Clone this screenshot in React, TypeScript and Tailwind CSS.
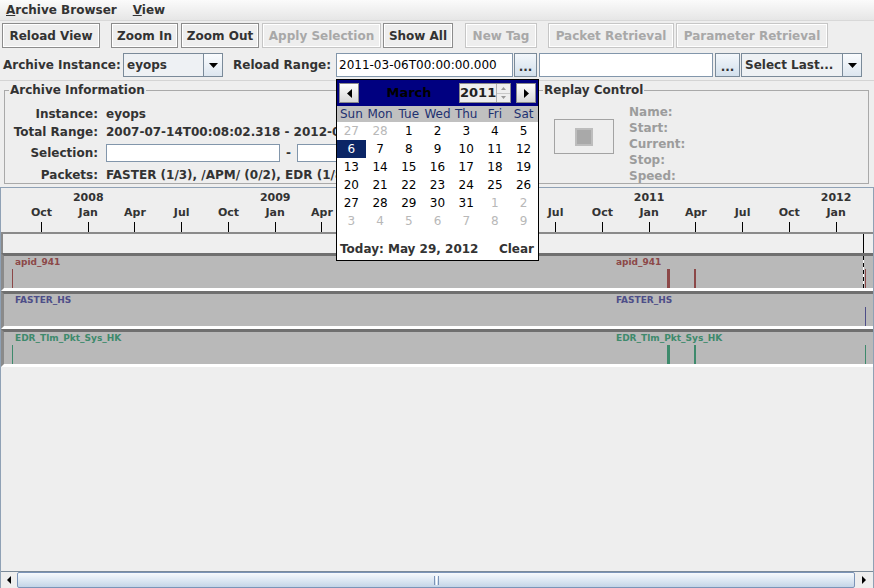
import clsx from 'clsx'

const toolButtons = [
  { label: 'Reload View', cls: 'ml-[2px] w-[98px]' },
  { label: 'Zoom In', cls: 'ml-[11px] w-[67px]' },
  { label: 'Zoom Out', cls: 'ml-[3px] w-[78px]' },
  { label: 'Apply Selection', cls: 'ml-[3px] w-[119px]', disabled: true },
  { label: 'Show All', cls: 'ml-[2px] w-[70px]' },
  { label: 'New Tag', cls: 'ml-[12px] w-[72px]', disabled: true },
  { label: 'Packet Retrieval', cls: 'ml-[11px] w-[126px]', disabled: true },
  { label: 'Parameter Retrieval', cls: 'ml-[2px] w-[152px]', disabled: true },
]

const months = ['Oct', 'Jan', 'Apr', 'Jul']
const quarters = Array.from({ length: 18 }, (_, i) => ({
  x: 41.5 + i * 46.74,
  month: months[i % 4],
  year: i % 4 === 1 ? String(2008 + (i - 1) / 4) : null,
}))

const tracks = [
  {
    name: 'apid_941',
    text: 'text-[#8c4848]',
    bg: 'bg-[#8c4848]',
    marks: [
      { x: 12, w: 1 },
      { x: 667, w: 3 },
      { x: 694, w: 2 },
      { x: 865, w: 1 },
    ],
    cursor: true,
  },
  { name: 'FASTER_HS', text: 'text-[#4e4e88]', bg: 'bg-[#4e4e88]', marks: [{ x: 865, w: 1 }], cursor: false },
  {
    name: 'EDR_Tlm_Pkt_Sys_HK',
    text: 'text-[#3e8a6c]',
    bg: 'bg-[#3e8a6c]',
    marks: [
      { x: 12, w: 1 },
      { x: 667, w: 3 },
      { x: 694, w: 2 },
      { x: 865, w: 1 },
    ],
    cursor: false,
  },
]

const weekdays = ['Sun', 'Mon', 'Tue', 'Wed', 'Thu', 'Fri', 'Sat']
const weeks = [
  [27, 28, 1, 2, 3, 4, 5],
  [6, 7, 8, 9, 10, 11, 12],
  [13, 14, 15, 16, 17, 18, 19],
  [20, 21, 22, 23, 24, 25, 26],
  [27, 28, 29, 30, 31, 1, 2],
  [3, 4, 5, 6, 7, 8, 9],
]
const outside = (row: number, d: number) => (row === 0 && d > 20) || (row >= 4 && d < 10)

function Combo({ text, cls }: { text: string; cls: string }) {
  return (
    <div className={clsx('flex h-[24px] border border-[#7a8a99] bg-[#eef1f4]', cls)}>
      <div className="flex flex-1 items-center pl-[3px] font-bold text-[#333]">{text}</div>
      <div className="flex w-[19px] items-center justify-center border-l border-[#7a8a99] bg-gradient-to-b from-[#fafcfe] to-[#dde6ef]">
        <svg width="9" height="5">
          <path d="M0 0h9L4.5 5z" fill="#000" />
        </svg>
      </div>
    </div>
  )
}

function DotsButton({ cls }: { cls: string }) {
  return (
    <div
      className={clsx(
        'flex h-[24px] items-end justify-center border border-[#7a8a99] bg-gradient-to-b from-[#f3f7fb] to-[#d3e0ec] pb-[3px] font-bold leading-none text-[#333]',
        cls,
      )}
    >
      ...
    </div>
  )
}

function ArrowBtn({ dir }: { dir: 'l' | 'r' }) {
  return (
    <div className="flex h-[20px] w-[20px] items-center justify-center border border-[#8a8a8a] bg-gradient-to-b from-[#ffffff] to-[#d8d8d8]">
      <svg width="5" height="9">
        <path d={dir === 'l' ? 'M5 0v9L0 4.5z' : 'M0 0v9L5 4.5z'} fill="#000" />
      </svg>
    </div>
  )
}

function Calendar() {
  return (
    <div className="absolute left-[336px] top-[79px] z-10 flex h-[182px] w-[203px] flex-col border border-black bg-white">
      {/* month / year header */}
      <div className="flex h-[26px] items-center bg-[#000080] px-[2px]">
        <ArrowBtn dir="l" />
        <div className="flex-1 text-center text-[13px] font-bold text-black">March</div>
        <div className="mr-[5px] flex h-[20px] w-[52px] border border-[#8a8a8a] bg-[#eeeeee]">
          <div className="flex flex-1 items-center justify-center text-[13px] font-bold text-[#222]">2011</div>
          <div className="flex w-[14px] flex-col border-l border-[#b0b0b0]">
            <div className="flex flex-1 items-center justify-center">
              <svg width="5" height="3">
                <path d="M0 3h5L2.5 0z" fill="#999" />
              </svg>
            </div>
            <div className="flex flex-1 items-center justify-center border-t border-[#c8c8c8]">
              <svg width="5" height="3">
                <path d="M0 0h5L2.5 3z" fill="#999" />
              </svg>
            </div>
          </div>
        </div>
        <ArrowBtn dir="r" />
      </div>
      <div className="grid h-[16px] grid-cols-7 items-center bg-[#c0c0c0] text-[#1e3170]">
        {weekdays.map((d) => (
          <div key={d} className="text-center leading-none">
            {d}
          </div>
        ))}
      </div>
      <div className="grid grid-cols-7">
        {weeks.map((w, r) =>
          w.map((d, c) => {
            const sel = r === 1 && c === 0
            return (
              <div
                key={`${r}-${c}`}
                className={clsx(
                  'flex h-[18px] items-center justify-center',
                  sel ? 'bg-[#0b2566] text-white' : outside(r, d) ? 'text-[#b8b8b8]' : 'text-black',
                )}
              >
                {d}
              </div>
            )
          }),
        )}
      </div>
      <div className="mt-auto mb-[1px] flex h-[20px] items-center justify-between px-[3px] font-bold text-[#333]">
        <span>Today: May 29, 2012</span>
        <span className="mr-[1px]">Clear</span>
      </div>
    </div>
  )
}

export default function App() {
  return (
    <div className="relative flex h-[588px] w-[874px] flex-col overflow-hidden bg-[#eeeeee] font-['DejaVu_Sans',sans-serif] text-[12px] text-[#333]">
      {/* Menu bar */}
      <div className="flex h-[21px] items-center border-b border-[#d8d8d8] bg-gradient-to-b from-[#fbfbfb] to-[#e6e6e6] font-bold">
        <span className="ml-[6px]">
          <span className="underline">A</span>rchive Browser
        </span>
        <span className="ml-[16px]">
          <span className="underline">V</span>iew
        </span>
      </div>

      {/* Toolbar */}
      <div className="flex h-[29px] items-center">
        {toolButtons.map((b) => (
          <div
            key={b.label}
            className={clsx(
              'flex h-[25px] items-center justify-center border font-bold shadow-[inset_1px_1px_0_#ffffff,inset_-1px_-1px_0_#ffffff]',
              b.cls,
              b.disabled ? 'border-[#c6c6c6] text-[#a8a8a8]' : 'border-[#8c8c8c] text-[#333]',
            )}
          >
            {b.label}
          </div>
        ))}
      </div>

      {/* Instance / range row */}
      <div className="flex h-[30px] items-center">
        <div className="ml-[3px] w-[120px] whitespace-nowrap font-bold">Archive Instance:</div>
        <Combo text="eyops" cls="w-[100px]" />
        <div className="ml-[10px] w-[103px] whitespace-nowrap font-bold">Reload Range:</div>
        <div className="flex h-[24px] w-[177px] items-center border border-[#8296ab] bg-white pl-[2px] text-black">
          2011-03-06T00:00:00.000
        </div>
        <DotsButton cls="ml-[1px] w-[23px]" />
        <div className="ml-[2px] h-[24px] w-[174px] border border-[#8296ab] bg-white" />
        <DotsButton cls="ml-[2px] w-[25px]" />
        <Combo text="Select Last..." cls="ml-[1px] w-[121px]" />
      </div>

      {/* Info panels */}
      <div className="flex h-[107px] border-t border-[#d4d4d4] px-[4px] pt-[2px]">
        <fieldset className="mb-[3px] w-[529px] min-w-0 border border-[#a9a9a9] pl-[1px]">
          <legend className="ml-[3px] px-[1px] font-bold leading-[15px]">Archive Information</legend>
          <div className="mt-[7px] grid grid-cols-[92px_1fr] gap-x-[8px] whitespace-nowrap font-bold">
            <div className="flex h-[18px] items-center justify-end">Instance:</div>
            <div className="flex h-[18px] items-center">eyops</div>
            <div className="flex h-[18px] items-center justify-end">Total Range:</div>
            <div className="flex h-[18px] items-center">2007-07-14T00:08:02.318 - 2012-03-26T08:41:20.062</div>
            <div className="flex h-[24px] items-center justify-end">Selection:</div>
            <div className="flex h-[24px] items-center">
              <div className="h-[18px] w-[174px] border border-[#8296ab] bg-white" />
              <span className="mx-[6px]">-</span>
              <div className="h-[18px] w-[174px] border border-[#8296ab] bg-white" />
            </div>
            <div className="flex h-[20px] items-center justify-end">Packets:</div>
            <div className="flex h-[20px] items-center">FASTER (1/3), /APM/ (0/2), EDR (1/8)</div>
          </div>
        </fieldset>
        <fieldset className="mb-[3px] ml-[5px] w-[331px] min-w-0 border border-[#a9a9a9]">
          <legend className="ml-[4px] px-[1px] font-bold leading-[15px]">Replay Control</legend>
          <div className="flex">
            <div className="ml-[15px] mt-[21px] flex h-[35px] w-[60px] items-center justify-center border border-[#a3a3a3]">
              <div className="h-[18px] w-[18px] border-2 border-[#bdbdbd] bg-[#a9a9a9]" />
            </div>
            <div className="ml-[15px] mt-[6px] flex flex-col font-bold leading-[16px] text-[#9c9c9c]">
              <span>Name:</span>
              <span>Start:</span>
              <span>Current:</span>
              <span>Stop:</span>
              <span>Speed:</span>
            </div>
          </div>
        </fieldset>
      </div>

      {/* Timeline */}
      <div className="flex flex-1 flex-col border-x border-t border-[#8fa1b5]">
        <div className="relative h-[44px] text-[11px] font-bold">
          {quarters.map((q) => (
            <div key={q.x} className="absolute top-0 flex h-full w-[40px] flex-col items-center" style={{ left: q.x - 21 }}>
              <span className="mt-[2px] h-[15px] leading-[15px]">{q.year}</span>
              <span className="leading-[15px]">{q.month}</span>
              <span className="mt-[2px] h-[10px] w-px bg-black" />
            </div>
          ))}
        </div>
        <div className="relative h-[21px] border-l-2 border-t-2 border-[#8a8a8a] bg-[#efefef]">
          <div className="absolute bottom-0 left-[860px] top-0 w-px bg-black" />
        </div>
        {tracks.map((t) => (
          <div
            key={t.name}
            className="relative h-[38px] border-b-[3px] border-l-[3px] border-t-[3px] border-b-white border-l-[#8a8a8a] border-t-[#6f6f6f] bg-[#b9b9b9] text-[9px] font-bold"
          >
            <span className={clsx('absolute left-[11px] top-[1px] leading-[11px]', t.text)}>{t.name}</span>
            <span className={clsx('absolute left-[612px] top-[1px] leading-[11px]', t.text)}>{t.name}</span>
            {t.marks.map((m) => (
              <div
                key={m.x}
                className={clsx('absolute bottom-0 h-[19px]', t.bg)}
                style={{ left: m.x - 4, width: m.w }}
              />
            ))}
            {t.cursor && (
              <div className="absolute bottom-0 left-[859px] top-0 w-px bg-[repeating-linear-gradient(to_bottom,#000_0_4px,#fff_4px_7px)]" />
            )}
          </div>
        ))}
        <div className="flex-1" />
        {/* Horizontal scrollbar */}
        <div className="flex h-[17px] border-t border-[#7a8a99] bg-[#eeeeee]">
          <div className="flex w-[16px] items-center justify-center">
            <svg width="4" height="8">
              <path d="M4 0v8L0 4z" fill="#000" />
            </svg>
          </div>
          <div className="flex flex-1 items-center justify-center rounded-[2px] border border-[#7b94b8] bg-gradient-to-b from-[#f6f9fc] via-[#dde8f3] to-[#c4d5e7]">
            <div className="flex gap-[1px]">
              <span className="h-[9px] w-px bg-[#7b94b8]" />
              <span className="h-[9px] w-px bg-white" />
              <span className="h-[9px] w-px bg-[#7b94b8]" />
            </div>
          </div>
          <div className="flex w-[18px] items-center justify-center">
            <svg width="4" height="8">
              <path d="M0 0v8L4 4z" fill="#000" />
            </svg>
          </div>
        </div>
      </div>

      <Calendar />
    </div>
  )
}
